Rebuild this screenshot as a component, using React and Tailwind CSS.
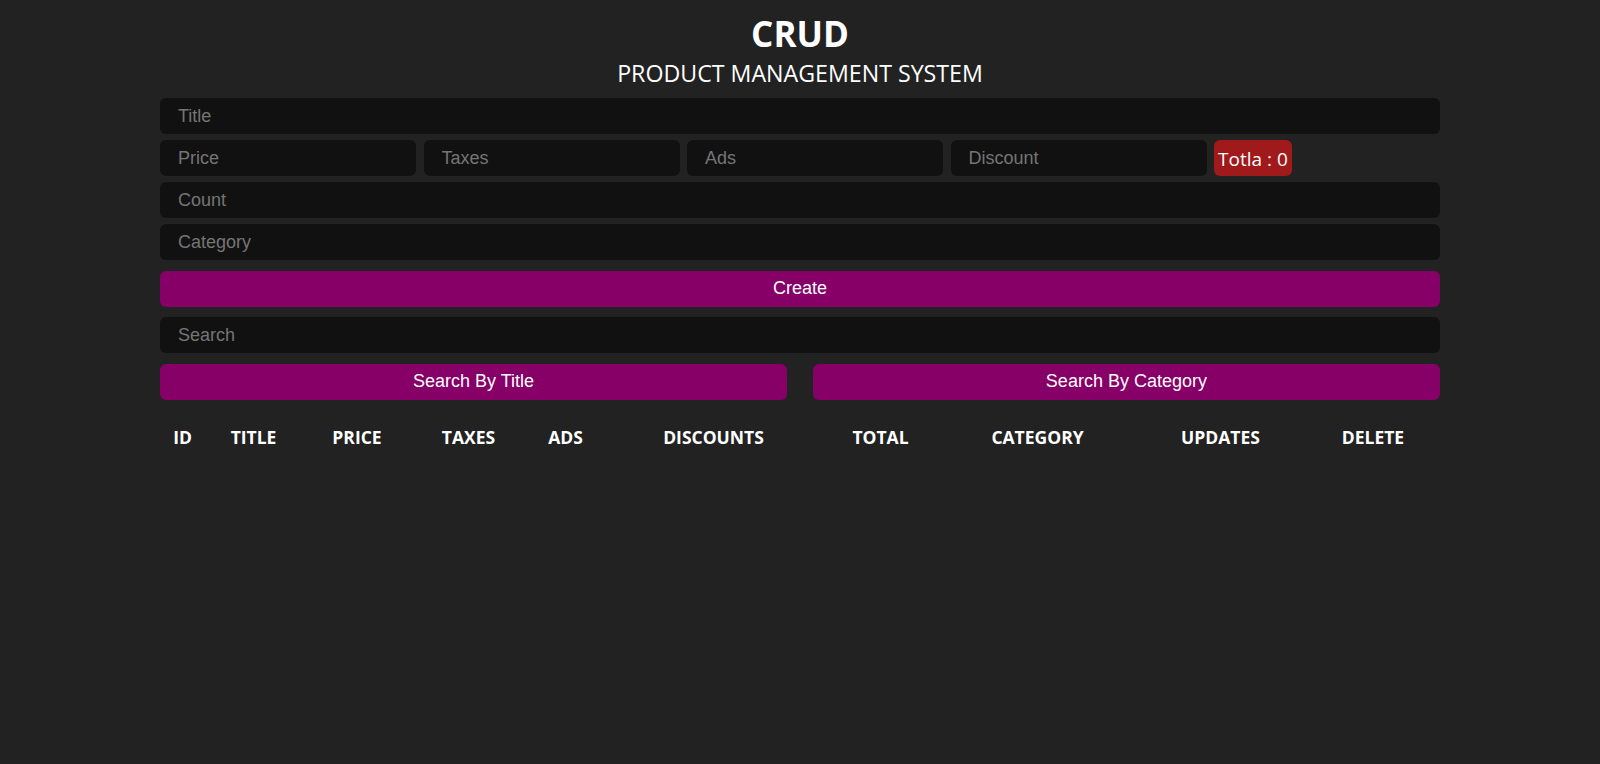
const FIELDS_TOP = ['Price', 'Taxes', 'Ads', 'Discount'];

const COLUMNS = [
  { label: 'ID', w: 'w-[45px]' },
  { label: 'TITLE', w: 'w-[97px]' },
  { label: 'PRICE', w: 'w-[110px]' },
  { label: 'TAXES', w: 'w-[113px]' },
  { label: 'ADS', w: 'w-[81px]' },
  { label: 'DISCOUNTS', w: 'w-[215px]' },
  { label: 'TOTAL', w: 'w-[119px]' },
  { label: 'CATEGORY', w: 'w-[195px]' },
  { label: 'UPDATES', w: 'w-[171px]' },
  { label: 'DELETE', w: 'w-[134px]' },
];

const inputCls =
  'h-[36px] rounded-[6px] bg-[#111111] pl-[18px] pr-3 text-[18px] text-white outline-none placeholder:text-[#757575] font-["Liberation_Sans",Arial,sans-serif]';

const btnCls =
  'h-[36px] rounded-[6px] bg-[#860067] pb-[2px] text-[18px] text-white font-["Liberation_Sans",Arial,sans-serif]';

export default function App() {
  return (
    <div className="min-h-[764px] w-full bg-[#222222] text-white">
      <div className="mx-auto w-[80%] font-['Open_Sans',sans-serif]">
        {/* Head */}
        <div className="pt-[14px] text-center">
          <h1 className="text-[35px] font-bold leading-[40px]">CRUD</h1>
          <p className="mt-[4px] text-[23.2px] leading-[31px]">PRODUCT MANAGEMENT SYSTEM</p>
        </div>

        {/* Inputs */}
        <div className="mt-[9px] flex flex-col gap-[6px]">
          <input className={inputCls} placeholder="Title" />
          <div className="flex items-center gap-[7.5px]">
            {FIELDS_TOP.map((f) => (
              <input key={f} className={`${inputCls} w-[256px]`} placeholder={f} />
            ))}
            <small className="flex h-[36px] items-center rounded-[6px] bg-[#a0191b] px-[4px] pt-[2px] text-[19px] text-white">
              Totla : 0
            </small>
          </div>
          <input className={inputCls} placeholder="Count" />
          <input className={inputCls} placeholder="Category" />
        </div>

        <button className={`${btnCls} mt-[11px] w-full`}>Create</button>

        {/* Search */}
        <div className="mt-[10px] flex flex-col">
          <input className={inputCls} placeholder="Search" />
          <div className="mt-[11px] flex justify-between">
            <button className={`${btnCls} w-[49%]`}>Search By Title</button>
            <button className={`${btnCls} w-[49%]`}>Search By Category</button>
          </div>
        </div>

        {/* Table */}
        <table className="mt-[19px] w-full table-fixed">
          <thead>
            <tr className="h-[36px]">
              {COLUMNS.map((c) => (
                <th key={c.label} className={`${c.w} text-center text-[17.5px] font-bold`}>
                  {c.label}
                </th>
              ))}
            </tr>
          </thead>
          <tbody></tbody>
        </table>
      </div>
    </div>
  );
}
